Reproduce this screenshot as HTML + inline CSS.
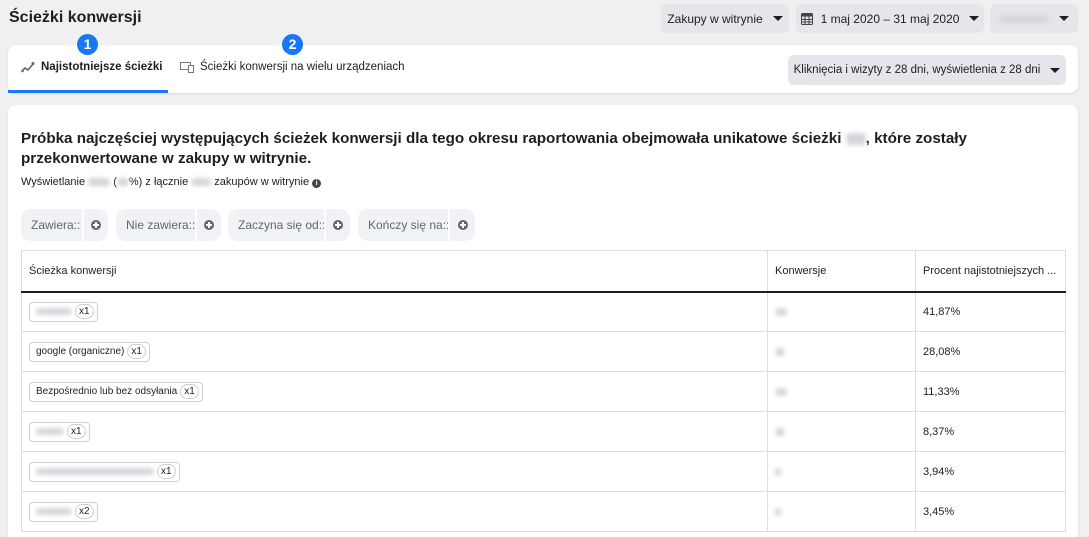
<!DOCTYPE html>
<html><head><meta charset="utf-8"><style>
*{box-sizing:border-box;margin:0;padding:0}
html,body{width:1089px;height:537px;overflow:hidden}
body{background:#f0f0f0;font-family:"Liberation Sans",Arial,sans-serif;color:#1c1e21;position:relative}
.abs{position:absolute;white-space:nowrap}
svg{flex-shrink:0}
.btn{position:absolute;top:4px;height:29px;background:#e4e6eb;border-radius:6px;font-size:12px;display:flex;align-items:center;justify-content:center;padding:0 6px;color:#1c1e21;white-space:nowrap}
.tri{display:inline-block;flex-shrink:0;width:0;height:0;border-left:5px solid transparent;border-right:5px solid transparent;border-top:5px solid #1c1e21;margin-left:10px}
.card{position:absolute;left:8px;width:1070px;background:#fff;border-radius:8px;box-shadow:0 1px 2px rgba(0,0,0,.1)}
.blur{display:inline-block;background:#d4d6da;border-radius:4px;filter:blur(2px);vertical-align:middle}
.chip{position:absolute;top:209px;height:32px;background:#f0f2f5;border-radius:10px;font-size:12px;color:#606770;display:flex;align-items:center;white-space:nowrap}
.chip span{padding-left:10px}
.chip .pl{position:absolute;top:0;height:32px;border-left:2px solid #fff;display:flex;align-items:center;justify-content:center}
.pl i{width:10px;height:10px;border-radius:50%;background:#606770;position:relative}
.pl i:before{content:"";position:absolute;left:2px;top:4px;width:6px;height:2px;background:#fff}
.pl i:after{content:"";position:absolute;left:4px;top:2px;width:2px;height:6px;background:#fff}
table{position:absolute;left:21px;top:250px;width:1045px;border-collapse:collapse;font-size:11px}
td{border:1px solid #dadde1;height:40px;padding:0 7px;vertical-align:middle;white-space:nowrap}
thead td{height:41px;border-bottom:2px solid #1c1e21}
.tag{display:inline-flex;align-items:center;border:1px solid #ccd0d5;border-radius:4px;height:20px;padding:0 3px 0 6px;font-size:10px}
.x{display:inline-block;border:1px solid #ccd0d5;border-radius:9px;padding:1px 3px;margin-left:3px;font-size:10px}
.num{position:absolute;top:34px;width:21px;height:21px;border-radius:50%;background:#1877f2;color:#fff;font-weight:bold;font-size:14px;text-align:center;line-height:21px}
</style></head><body>
<div class="abs" style="left:9px;top:9px;font-size:16px;font-weight:bold">Ścieżki konwersji</div>
<div class="btn" style="left:661px;width:128px">Zakupy w witrynie<span class="tri"></span></div>
<div class="btn" style="left:796px;width:188px"><svg width="12" height="12" viewBox="0 0 12 12" style="margin-right:8px"><rect x="0.5" y="0.5" width="11" height="11" rx="1" fill="none" stroke="#444" /><rect x="0.5" y="0.5" width="11" height="3" fill="#444"/><path d="M4 3v9M8 3v9M0 6.5h12M0 9h12" stroke="#444"/></svg>1 maj 2020 – 31 maj 2020<span class="tri"></span></div>
<div class="btn" style="left:990px;width:88px"><span class="blur" style="width:50px;height:8px"></span><span class="tri"></span></div>

<div class="card" style="top:45px;height:48px"></div>
<div class="abs" style="left:8px;top:90px;width:160px;height:3px;background:#1877f2"></div>
<div class="abs" style="left:21px;top:61px;font-size:11.5px;font-weight:bold;display:flex;align-items:center"><svg width="14" height="12" viewBox="0 0 14 12" style="margin-right:6px"><path d="M1 10l3-3 3 2 5-6" fill="none" stroke="#606770" stroke-width="1.6"/><circle cx="12" cy="2.5" r="1.5" fill="#606770"/><circle cx="1.5" cy="10" r="1.3" fill="#606770"/></svg>Najistotniejsze ścieżki</div>
<div class="abs" style="left:180px;top:61px;font-size:11.5px;display:flex;align-items:center"><svg width="14" height="12" viewBox="0 0 14 12" style="margin-right:6px"><rect x="0.5" y="1.5" width="10" height="7" fill="none" stroke="#777"/><rect x="8.5" y="4.5" width="5" height="7" fill="#fff" stroke="#777"/></svg>Ścieżki konwersji na wielu urządzeniach</div>
<div class="num" style="left:77px">1</div>
<div class="num" style="left:282px">2</div>
<div class="btn" style="left:788px;top:55px;height:30px;width:278px;font-size:11.5px">Kliknięcia i wizyty z 28 dni, wyświetlenia z 28 dni<span class="tri"></span></div>

<div class="card" style="top:105px;height:450px"></div>
<div class="abs" style="left:21px;top:129px;font-size:15.2px;font-weight:bold;line-height:20px;width:1000px;white-space:normal">Próbka najczęściej występujących ścieżek konwersji dla tego okresu raportowania obejmowała unikatowe ścieżki <span class="blur" style="width:20px;height:12px"></span>, które zostały przekonwertowane w zakupy w witrynie.</div>
<div class="abs" style="left:21px;top:176px;font-size:11px">Wyświetlanie <span class="blur" style="width:22px;height:8px"></span> (<span class="blur" style="width:12px;height:8px"></span>%) z łącznie <span class="blur" style="width:20px;height:8px"></span> zakupów w witrynie <span style="display:inline-block;width:9px;height:9px;border-radius:50%;background:#444;color:#fff;font-size:7px;text-align:center;line-height:9px;font-weight:bold">i</span></div>

<div class="chip" style="left:21px;width:87px"><span>Zawiera::</span><div class="pl" style="left:61px;width:26px"><i></i></div></div>
<div class="chip" style="left:116px;width:105px"><span>Nie zawiera::</span><div class="pl" style="left:79px;width:26px"><i></i></div></div>
<div class="chip" style="left:228px;width:122px"><span>Zaczyna się od::</span><div class="pl" style="left:96px;width:26px"><i></i></div></div>
<div class="chip" style="left:358px;width:117px"><span>Kończy się na::</span><div class="pl" style="left:90px;width:27px"><i></i></div></div>

<table>
<thead><tr><td style="width:746px">Ścieżka konwersji</td><td style="width:148px">Konwersje</td><td>Procent najistotniejszych ...</td></tr></thead>
<tbody>
<tr><td><span class="tag"><span class="blur" style="width:36px;height:7px"></span><span class="x">x1</span></span></td><td><span class="blur" style="width:12px;height:8px"></span></td><td>41,87%</td></tr>
<tr><td><span class="tag">google (organiczne)<span class="x">x1</span></span></td><td><span class="blur" style="width:10px;height:8px"></span></td><td>28,08%</td></tr>
<tr><td><span class="tag">Bezpośrednio lub bez odsyłania<span class="x">x1</span></span></td><td><span class="blur" style="width:12px;height:8px"></span></td><td>11,33%</td></tr>
<tr><td><span class="tag"><span class="blur" style="width:28px;height:7px"></span><span class="x">x1</span></span></td><td><span class="blur" style="width:10px;height:8px"></span></td><td>8,37%</td></tr>
<tr><td><span class="tag"><span class="blur" style="width:118px;height:7px"></span><span class="x">x1</span></span></td><td><span class="blur" style="width:6px;height:8px"></span></td><td>3,94%</td></tr>
<tr><td><span class="tag"><span class="blur" style="width:36px;height:7px"></span><span class="x">x2</span></span></td><td><span class="blur" style="width:6px;height:8px"></span></td><td>3,45%</td></tr>
</tbody></table>
</body></html>
